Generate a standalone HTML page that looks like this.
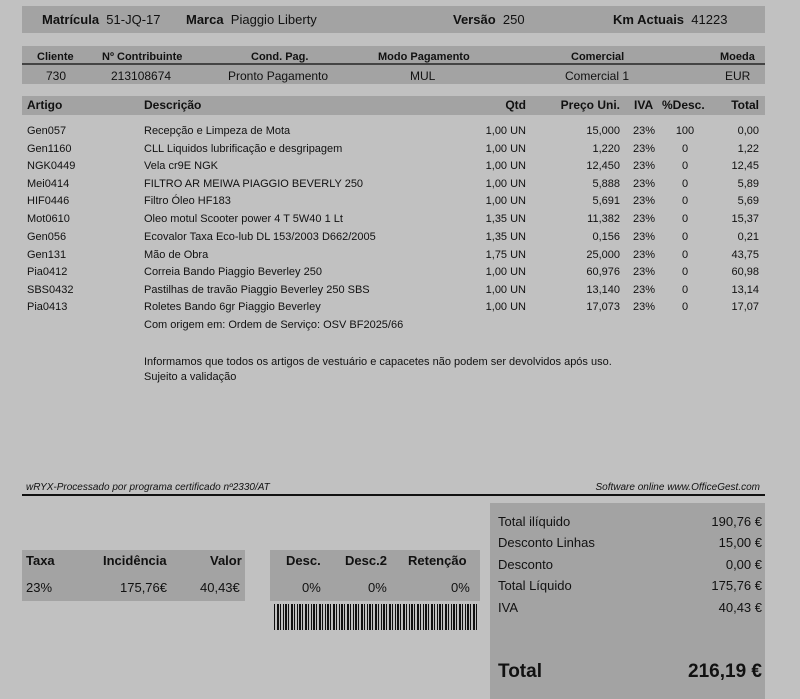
<!DOCTYPE html>
<html><head><meta charset="utf-8"><style>
*{margin:0;padding:0;box-sizing:border-box}
body{width:800px;height:699px;background:#c1c1c1;font-family:"Liberation Sans Narrow","Liberation Sans",sans-serif;color:#111;position:relative;overflow:hidden;font-size:11px}
.a{position:absolute;white-space:nowrap}
.box{position:absolute;background:#a3a3a3}
b{font-weight:bold}
.r{text-align:right}
.row{position:absolute;left:0;width:800px;height:16px;font-size:11px}
.row span{position:absolute;white-space:nowrap}
.c1{left:27px}.c2{left:144px}.c3{right:274px}.c4{right:180px}.c5{left:633px}.c6{left:665px;width:40px;text-align:center}.c7{right:41px}
</style></head><body>
<div class="box" style="left:22px;top:6px;width:743px;height:27px"></div>
<div class="a" style="left:42px;top:12px;font-size:13px"><b>Matrícula</b>&nbsp; 51-JQ-17</div>
<div class="a" style="left:186px;top:12px;font-size:13px"><b>Marca</b>&nbsp; Piaggio Liberty</div>
<div class="a" style="left:453px;top:12px;font-size:13px"><b>Versão</b>&nbsp; 250</div>
<div class="a" style="left:613px;top:12px;font-size:13px"><b>Km Actuais</b>&nbsp; 41223</div>

<div class="box" style="left:22px;top:46px;width:743px;height:38px"></div>
<div class="a" style="left:22px;top:63px;width:743px;height:2px;background:#444"></div>
<div class="a" style="left:37px;top:51px;font-weight:bold">Cliente</div>
<div class="a" style="left:102px;top:51px;font-weight:bold">Nº Contribuinte</div>
<div class="a" style="left:251px;top:51px;font-weight:bold">Cond. Pag.</div>
<div class="a" style="left:378px;top:51px;font-weight:bold">Modo Pagamento</div>
<div class="a" style="left:571px;top:51px;font-weight:bold">Comercial</div>
<div class="a" style="left:720px;top:51px;font-weight:bold">Moeda</div>
<div class="a" style="left:46px;top:69px;font-size:12px">730</div>
<div class="a" style="left:111px;top:69px;font-size:12px">213108674</div>
<div class="a" style="left:228px;top:69px;font-size:12px">Pronto Pagamento</div>
<div class="a" style="left:410px;top:69px;font-size:12px">MUL</div>
<div class="a" style="left:565px;top:69px;font-size:12px">Comercial 1</div>
<div class="a" style="left:725px;top:69px;font-size:12px">EUR</div>

<div class="box" style="left:22px;top:96px;width:743px;height:19px"></div>
<div class="row" style="top:98px;font-size:12px;font-weight:bold"><span class="c1">Artigo</span><span class="c2">Descrição</span><span class="c3">Qtd</span><span class="c4">Preço Uni.</span><span style="left:634px">IVA</span><span style="left:662px">%Desc.</span><span class="c7">Total</span></div>

<div class="row" style="top:125px"><span class="c1">Gen057</span><span class="c2">Recepção e Limpeza de Mota</span><span class="c3">1,00 UN</span><span class="c4">15,000</span><span class="c5">23%</span><span class="c6">100</span><span class="c7">0,00</span></div>
<div class="row" style="top:143px"><span class="c1">Gen1160</span><span class="c2">CLL Liquidos lubrificação e desgripagem</span><span class="c3">1,00 UN</span><span class="c4">1,220</span><span class="c5">23%</span><span class="c6">0</span><span class="c7">1,22</span></div>
<div class="row" style="top:160px"><span class="c1">NGK0449</span><span class="c2">Vela cr9E NGK</span><span class="c3">1,00 UN</span><span class="c4">12,450</span><span class="c5">23%</span><span class="c6">0</span><span class="c7">12,45</span></div>
<div class="row" style="top:178px"><span class="c1">Mei0414</span><span class="c2">FILTRO AR MEIWA PIAGGIO BEVERLY 250</span><span class="c3">1,00 UN</span><span class="c4">5,888</span><span class="c5">23%</span><span class="c6">0</span><span class="c7">5,89</span></div>
<div class="row" style="top:195px"><span class="c1">HIF0446</span><span class="c2">Filtro Óleo HF183</span><span class="c3">1,00 UN</span><span class="c4">5,691</span><span class="c5">23%</span><span class="c6">0</span><span class="c7">5,69</span></div>
<div class="row" style="top:213px"><span class="c1">Mot0610</span><span class="c2">Oleo motul Scooter power 4 T 5W40 1 Lt</span><span class="c3">1,35 UN</span><span class="c4">11,382</span><span class="c5">23%</span><span class="c6">0</span><span class="c7">15,37</span></div>
<div class="row" style="top:231px"><span class="c1">Gen056</span><span class="c2">Ecovalor Taxa Eco-lub DL 153/2003 D662/2005</span><span class="c3">1,35 UN</span><span class="c4">0,156</span><span class="c5">23%</span><span class="c6">0</span><span class="c7">0,21</span></div>
<div class="row" style="top:249px"><span class="c1">Gen131</span><span class="c2">Mão de Obra</span><span class="c3">1,75 UN</span><span class="c4">25,000</span><span class="c5">23%</span><span class="c6">0</span><span class="c7">43,75</span></div>
<div class="row" style="top:266px"><span class="c1">Pia0412</span><span class="c2">Correia Bando Piaggio Beverley 250</span><span class="c3">1,00 UN</span><span class="c4">60,976</span><span class="c5">23%</span><span class="c6">0</span><span class="c7">60,98</span></div>
<div class="row" style="top:284px"><span class="c1">SBS0432</span><span class="c2">Pastilhas de travão Piaggio Beverley 250 SBS</span><span class="c3">1,00 UN</span><span class="c4">13,140</span><span class="c5">23%</span><span class="c6">0</span><span class="c7">13,14</span></div>
<div class="row" style="top:301px"><span class="c1">Pia0413</span><span class="c2">Roletes Bando 6gr Piaggio Beverley</span><span class="c3">1,00 UN</span><span class="c4">17,073</span><span class="c5">23%</span><span class="c6">0</span><span class="c7">17,07</span></div>
<div class="row" style="top:319px"><span class="c2">Com origem em: Ordem de Serviço: OSV BF2025/66</span></div>
<div class="row" style="top:356px"><span class="c2">Informamos que todos os artigos de vestuário e capacetes não podem ser devolvidos após uso.</span></div>
<div class="row" style="top:371px"><span class="c2">Sujeito a validação</span></div>

<div class="a" style="left:26px;top:482px;font-size:10px;font-style:italic">wRYX-Processado por programa certificado nº2330/AT</div>
<div class="a" style="right:40px;top:482px;font-size:10px;font-style:italic">Software online www.OfficeGest.com</div>
<div class="a" style="left:22px;top:494px;width:743px;height:2px;background:#111"></div>

<div class="box" style="left:490px;top:503px;width:275px;height:196px"></div>
<div class="a" style="left:498px;top:514px;font-size:13px">Total ilíquido</div><div class="a" style="right:38px;top:514px;font-size:13px">190,76 €</div>
<div class="a" style="left:498px;top:535px;font-size:13px">Desconto Linhas</div><div class="a" style="right:38px;top:535px;font-size:13px">15,00 €</div>
<div class="a" style="left:498px;top:557px;font-size:13px">Desconto</div><div class="a" style="right:38px;top:557px;font-size:13px">0,00 €</div>
<div class="a" style="left:498px;top:578px;font-size:13px">Total Líquido</div><div class="a" style="right:38px;top:578px;font-size:13px">175,76 €</div>
<div class="a" style="left:498px;top:600px;font-size:13px">IVA</div><div class="a" style="right:38px;top:600px;font-size:13px">40,43 €</div>
<div class="a" style="left:498px;top:661px;font-size:19px;font-weight:bold">Total</div><div class="a" style="right:38px;top:661px;font-size:19px;font-weight:bold">216,19 €</div>

<div class="box" style="left:22px;top:550px;width:223px;height:51px"></div>
<div class="a" style="left:26px;top:553px;font-size:13px;font-weight:bold">Taxa</div>
<div class="a" style="left:103px;top:553px;font-size:13px;font-weight:bold">Incidência</div>
<div class="a" style="left:210px;top:553px;font-size:13px;font-weight:bold">Valor</div>
<div class="a" style="left:26px;top:580px;font-size:13px">23%</div>
<div class="a" style="left:120px;top:580px;font-size:13px">175,76€</div>
<div class="a" style="left:200px;top:580px;font-size:13px">40,43€</div>

<div class="box" style="left:270px;top:550px;width:210px;height:51px"></div>
<div class="a" style="left:286px;top:553px;font-size:13px;font-weight:bold">Desc.</div>
<div class="a" style="left:345px;top:553px;font-size:13px;font-weight:bold">Desc.2</div>
<div class="a" style="left:408px;top:553px;font-size:13px;font-weight:bold">Retenção</div>
<div class="a" style="left:302px;top:580px;font-size:13px">0%</div>
<div class="a" style="left:368px;top:580px;font-size:13px">0%</div>
<div class="a" style="left:451px;top:580px;font-size:13px">0%</div>

<div class="a" style="left:274px;top:604px;width:203px;height:26px;background:repeating-linear-gradient(90deg,#111 0 1px,#c1c1c1 1px 3px,#111 3px 5px,#c1c1c1 5px 6px,#111 6px 7px,#c1c1c1 7px 9px,#111 9px 10px,#c1c1c1 10px 11px,#111 11px 13px,#c1c1c1 13px 14px)"></div>
</body></html>
